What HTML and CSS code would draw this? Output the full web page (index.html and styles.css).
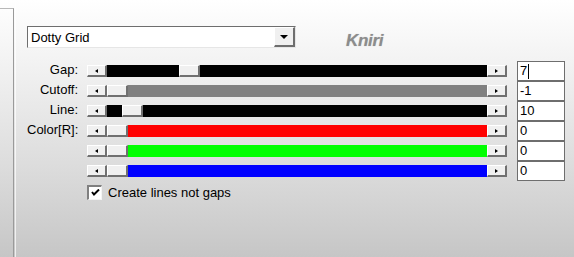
FILE: index.html
```html
<!DOCTYPE html>
<html>
<head>
<meta charset="utf-8">
<link rel="stylesheet" href="styles.css">
</head>
<body>
<div class="app">
  <div class="side"></div>
  <div class="main">
    <div class="top">
      <div class="combo">
        <span class="combo-text">Dotty Grid</span>
        <span class="combo-btn"><span class="down"></span></span>
      </div>
      <div class="logo">Kniri</div>
    </div>
    <div class="controls">
      <div class="label">Gap:</div>
      <div class="slider">
        <span class="btn"><span class="larr"></span></span>
        <span class="trough black"><span class="fill" style="width:72px"></span><span class="thumb"></span></span>
        <span class="btn"><span class="rarr"></span></span>
      </div>
      <div class="box">7<span class="caret"></span></div>

      <div class="label">Cutoff:</div>
      <div class="slider">
        <span class="btn"><span class="larr"></span></span>
        <span class="trough gray"><span class="fill" style="width:0px"></span><span class="thumb"></span></span>
        <span class="btn"><span class="rarr"></span></span>
      </div>
      <div class="box">-1</div>

      <div class="label">Line:</div>
      <div class="slider">
        <span class="btn"><span class="larr"></span></span>
        <span class="trough black"><span class="fill" style="width:15px"></span><span class="thumb"></span></span>
        <span class="btn"><span class="rarr"></span></span>
      </div>
      <div class="box">10</div>

      <div class="label">Color[R]:</div>
      <div class="slider">
        <span class="btn"><span class="larr"></span></span>
        <span class="trough red"><span class="fill" style="width:0px"></span><span class="thumb"></span></span>
        <span class="btn"><span class="rarr"></span></span>
      </div>
      <div class="box">0</div>

      <div class="label"></div>
      <div class="slider">
        <span class="btn"><span class="larr"></span></span>
        <span class="trough green"><span class="fill" style="width:0px"></span><span class="thumb"></span></span>
        <span class="btn"><span class="rarr"></span></span>
      </div>
      <div class="box">0</div>

      <div class="label"></div>
      <div class="slider">
        <span class="btn"><span class="larr"></span></span>
        <span class="trough blue"><span class="fill" style="width:0px"></span><span class="thumb"></span></span>
        <span class="btn"><span class="rarr"></span></span>
      </div>
      <div class="box">0</div>

      <div class="label"></div>
      <label class="check">
        <span class="cb"><svg width="9" height="8" viewBox="0 0 9 8"><path d="M1 3 L3 5.5 L8 0.5" fill="none" stroke="#000" stroke-width="2"/></svg></span>
        <span>Create lines not gaps</span>
      </label>
    </div>
  </div>
</div>
</body>
</html>
```
FILE: styles.css
```css
html, body {
  margin: 0;
  padding: 0;
}
body {
  width: 574px;
  height: 257px;
  overflow: hidden;
  background: linear-gradient(#ffffff 0%, #f2f2f2 25%, #dcdcdc 65%, #c6c6c6 100%);
  font-family: "Liberation Sans", Arial, sans-serif;
  font-size: 13px;
  color: #000;
}
.app {
  display: flex;
  height: 257px;
}
.side {
  width: 13px;
  margin-top: 8px;
  border-top: 1px solid #b8b8b8;
  border-right: 1px solid #9a9a9a;
  flex: none;
}
.main {
  flex: 1;
  margin-left: 1px;
  border-left: 1px solid rgba(255,255,255,0.7);
  padding: 26px 0 0 11px;
}
.top {
  display: flex;
  align-items: flex-start;
  height: 22px;
}
.combo {
  width: 269px;
  height: 22px;
  box-sizing: border-box;
  background: #fff;
  border-top: 1px solid #6e6e6e;
  border-left: 1px solid #6e6e6e;
  border-right: 1px solid #e6e6e6;
  border-bottom: 1px solid #e6e6e6;
  display: flex;
  align-items: center;
}
.combo-text {
  flex: 1;
  padding-left: 3px;
}
.combo-btn {
  width: 21px;
  height: 20px;
  box-sizing: border-box;
  background: #f0f0f0;
  border-top: 1px solid #fff;
  border-left: 1px solid #fff;
  border-right: 2px solid #6e6e6e;
  border-bottom: 2px solid #6e6e6e;
  display: flex;
  align-items: center;
  justify-content: center;
}
.down {
  width: 0;
  height: 0;
  border-left: 4px solid transparent;
  border-right: 4px solid transparent;
  border-top: 4px solid #000;
}
.logo {
  margin-left: 50px;
  margin-top: 5px;
  font-size: 17px;
  font-weight: bold;
  font-style: italic;
  color: #8c8c8c;
  text-shadow: 0 0 1px #bbb;
  letter-spacing: -0.3px;
}
.controls {
  margin-top: 13px;
  display: grid;
  grid-template-columns: 53px 427px 58px;
  grid-auto-rows: 20px;
  align-items: center;
}
.label {
  text-align: right;
  padding-right: 2px;
  line-height: 20px;
  position: relative;
  top: -1px;
}
.slider {
  margin-left: 7px;
  height: 12px;
  display: flex;
}
.btn {
  width: 20px;
  height: 12px;
  box-sizing: border-box;
  background: #f0f0f0;
  border-top: 1px solid #fff;
  border-left: 1px solid #fff;
  border-right: 2px solid #707070;
  border-bottom: 2px solid #707070;
  display: flex;
  align-items: center;
  justify-content: center;
  flex: none;
}
.larr {
  width: 0;
  height: 0;
  border-top: 2.5px solid transparent;
  border-bottom: 2.5px solid transparent;
  border-right: 3px solid #000;
}
.rarr {
  width: 0;
  height: 0;
  border-top: 2.5px solid transparent;
  border-bottom: 2.5px solid transparent;
  border-left: 3px solid #000;
}
.trough {
  flex: 1;
  display: flex;
  height: 12px;
}
.fill { flex: none; }
.thumb {
  width: 21px;
  height: 12px;
  box-sizing: border-box;
  background: #f0f0f0;
  border-top: 1px solid #fff;
  border-left: 1px solid #fff;
  border-right: 2px solid #707070;
  border-bottom: 2px solid #707070;
  flex: none;
}
.black { background: #000; }
.gray { background: #808080; }
.red { background: #ff0000; }
.green { background: #00ff00; }
.blue { background: #0000ff; }
.box {
  margin-left: 10px;
  height: 20px;
  box-sizing: border-box;
  border: 1px solid #6e6e6e;
  background: #fff;
  padding-left: 2px;
  line-height: 18px;
  display: flex;
  align-items: center;
}
.caret {
  display: inline-block;
  width: 1px;
  height: 15px;
  background: #000;
  margin-left: 1px;
}
.check {
  grid-column: 2 / 4;
  align-self: start;
  margin-left: 7px;
  margin-top: 4px;
  display: flex;
  align-items: center;
  gap: 6px;
}
.cb {
  width: 15px;
  height: 15px;
  box-sizing: border-box;
  background: #fff;
  border-top: 2px solid #808080;
  border-left: 2px solid #808080;
  border-right: 1px solid #f4f4f4;
  border-bottom: 1px solid #f4f4f4;
  display: flex;
  align-items: center;
  justify-content: center;
}
```
